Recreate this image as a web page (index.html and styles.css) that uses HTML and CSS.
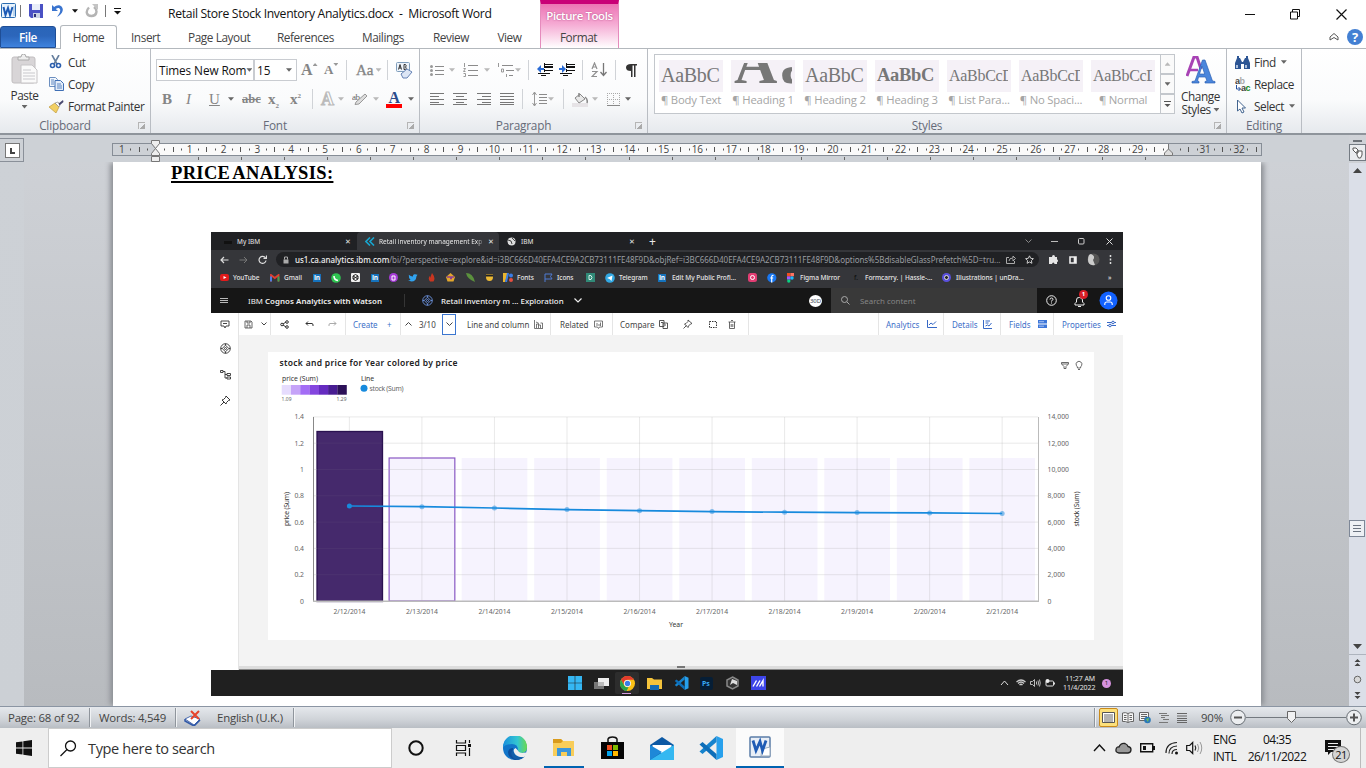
FILE: index.html
```html
<!DOCTYPE html>
<html lang="en">
<head>
<meta charset="utf-8">
<title>Retail Store Stock Inventory Analytics.docx - Microsoft Word</title>
<link rel="stylesheet" href="styles.css">
</head>
<body>
<div class="window">
<header class="titlebar">
  <div class="quick">
    <svg width="16" height="16" viewBox="0 0 16 16"><rect x=".5" y=".5" width="14" height="14" rx="1" fill="#e9f3fc" stroke="#2b6cb0"/><path d="M2.500 4l2 8 2.500-7 2 7 2.500-8" fill="none" stroke="#1d5bb5" stroke-width="2"/><path d="M13 3v10" stroke="#8db6df"/></svg>
    <i class="vsep"></i>
    <svg width="14" height="14" viewBox="0 0 14 14"><path d="M0 0h14v14H2l-2-2z" fill="#4a51c4"/><path d="M3 0h8v6H3z" fill="#e8edf8"/><path d="M4 9h7v5H4z" fill="#c9d2e4"/><path d="M5 10h2v3H5z" fill="#2b2f78"/></svg>
    <svg width="14" height="14" viewBox="0 0 14 14"><path d="M1 1v6h6L4.800 5C8 2.500 11 5 8 10l-2 3c6-3 8-9 3-11.500C7 .6 5 1.500 3.200 3z" fill="#3a74cf"/></svg>
    <i class="caret dark"></i>
    <svg width="14" height="14" viewBox="0 0 14 14"><path d="M9 3c4 3 3 9-2.500 9S.5 7 4 3.500" fill="none" stroke="#b4b4b4" stroke-width="2.400"/><path d="M7 0h6v6z" fill="#c4c4c4"/></svg>
    <i class="vsep"></i>
    <svg width="8" height="7" viewBox="0 0 8 7"><path d="M0 .5h7" stroke="#111"/><path d="M0 3h7L3.500 6.500z" fill="#111"/></svg>
  </div>
  <div class="doc-title">Retail Store Stock Inventory Analytics.docx&nbsp; -&nbsp; Microsoft Word</div>
  <div class="win-controls">
    <svg width="10" height="12"><path d="M0 6.500h10" stroke="#111"/></svg>
    <svg width="10" height="11"><path d="M.5 3h7v7h-7zM2.500 3V.5h7v7H7.500" fill="none" stroke="#111"/></svg>
    <svg width="11" height="11"><path d="M.5.500l10 10M10.500.5l-10 10" stroke="#111" stroke-width="1.200"/></svg>
  </div>
</header>
<nav class="tabs">
  <span class="tab file">File</span><span class="tab home">Home</span><span class="tab">Insert</span><span class="tab">Page Layout</span><span class="tab">References</span><span class="tab">Mailings</span><span class="tab">Review</span><span class="tab">View</span><span class="tab format">Format</span>
  <div class="tab-help">
    <svg width="10" height="8"><path d="M1 4l4-3.500L9 4v3L5 4.500 1 7z" fill="#fff" stroke="#555"/></svg>
    <span class="help">?</span>
  </div>
</nav>
<div class="context-tab">Picture Tools</div>

<section class="ribbon">
  <div class="group clipboard">
    <div class="clip-body">
      <div class="paste">
        <svg width="28" height="31" viewBox="0 0 28 31"><rect x="1" y="3" width="23" height="26" rx="2" fill="#d8d5d7" stroke="#c1bec0"/><path d="M7 3h3q0-3 2.500-3T15 3h3v3H7z" fill="#eee" stroke="#aaa"/><path d="M10 11h11l5 5v13H10z" fill="#fafafa" stroke="#c6c4c6"/><path d="M12 16h8M12 19h12M12 22h12M12 25h12" stroke="#c8c8cc"/></svg>
        <span>Paste</span><i class="caret"></i>
      </div>
      <div class="clip-list">
        <span><svg width="14" height="14" viewBox="0 0 14 14"><path d="M3 0l5 9M10 0L5 9" stroke="#667f9e" stroke-width="1.600"/><circle cx="3.500" cy="10.500" r="2" fill="none" stroke="#2a5eae" stroke-width="1.600"/><circle cx="9.500" cy="10.500" r="2" fill="none" stroke="#2a5eae" stroke-width="1.600"/></svg>Cut</span>
        <span><svg width="15" height="14" viewBox="0 0 15 14"><path d="M.5.500h6l2 2v7h-8z" fill="#f1f6fc" stroke="#6c8fc0"/><path d="M6 3.500h5.500l3 3v7H6z" fill="#e3ecf8" stroke="#3f6fb5"/><path d="M2 3h3M2 5h3M2 7h3M8 7h4M8 9h5M8 11h5" stroke="#5c86c2"/></svg>Copy</span>
        <span><svg width="15" height="13" viewBox="0 0 15 13"><path d="M0 7l6-4 4 4-3 6z" fill="#f1cf63" stroke="#b98f2c" stroke-width=".6"/><path d="M6 3l3-1 2 3-1 2z" fill="#fff" stroke="#777" stroke-width=".6"/><path d="M9.500 3.500L14 0l.5 2-4 3.500z" fill="#4a4a70"/></svg>Format Painter</span>
      </div>
    </div>
    <div class="group-label">Clipboard<i class="launch"></i></div>
  </div>

  <div class="group font">
    <div class="row font-top">
      <span class="combo">Times New Rom<i class="caret"></i></span><span class="combo">15<i class="caret"></i></span>
      <span class="serif grow">A<i class="caret up"></i></span><span class="serif shrink">A<i class="caret"></i></span><i class="gsep"></i><span class="serif aa">Aa<i class="caret dim"></i></span><i class="gsep"></i>
      <svg width="17" height="17" viewBox="0 0 17 17"><rect x=".5" y=".5" width="13" height="9" rx="1" fill="#eef4fb" stroke="#7f9dbb"/><path d="M2.500 7.500l1.500-5 1.500 5M3 6h2M8 2.500v5h1.500q1.500-1.200 0-2.500 1.500-1 0-2.500z" fill="none" stroke="#333"/><path d="M5 12l6-5 5 3-5 6H7z" fill="#dde6f5" stroke="#6683b5"/></svg>
    </div>
    <div class="row font-bottom">
      <b class="serif">B</b><em class="serif">I</em><u class="serif">U</u><i class="caret"></i><s class="serif abc">abc</s><span class="serif xs">x<sub>2</sub></span><span class="serif xs">x<sup>2</sup></span><i class="gsep"></i><span class="outline">A</span><i class="caret dim"></i>
      <svg width="16" height="15" viewBox="0 0 16 15"><text x="0" y="8" class="ic-ab">ab</text><path d="M4 10l9-8 2 2-8 8-4 .5z" fill="#ddd" stroke="#999"/></svg><i class="caret dim"></i>
      <span class="fontcolor">A</span><i class="caret"></i>
    </div>
    <div class="group-label">Font<i class="launch"></i></div>
  </div>

  <div class="group paragraph">
    <div class="row para-top">
      <svg width="14" height="13"><path d="M5 2.500h9M5 6.500h9M5 10.500h9" stroke="#8b8b8b"/><circle cx="1.500" cy="2.500" r="1.500" fill="#999"/><circle cx="1.500" cy="6.500" r="1.500" fill="#999"/><circle cx="1.500" cy="10.500" r="1.500" fill="#999"/></svg><i class="caret dim"></i>
      <svg width="15" height="14"><path d="M5 2.500h10M5 7.500h10M5 12.500h10" stroke="#8b8b8b"/><path d="M1.500 0v4M.500 5.500h2l-2 3h2M.5 10.500h2v3h-2" fill="none" stroke="#999"/></svg><i class="caret dim"></i>
      <svg width="17" height="15"><path d="M5 2.500h11M9 7.500h8M12 12.500h4" stroke="#8b8b8b"/><path d="M1.500 0v4M4.500 6h2v3h-2zM9.500 11v3" fill="none" stroke="#999"/></svg><i class="caret dim"></i><i class="gsep"></i>
      <svg width="16" height="14"><path d="M7 1.500h9M7 7.500h9M1 10.500h12M4 12.500h5" stroke="#111"/><path d="M7 4h9" stroke="#111" stroke-width="2"/><path d="M7.500 0v14" stroke="#111" stroke-dasharray="1 1"/><path d="M0 6l4-4v3h3v2H4v3z" fill="#2a6cd6"/></svg>
      <svg width="16" height="14"><path d="M7 1.500h9M7 7.500h9M1 10.500h12M4 12.500h5" stroke="#111"/><path d="M7 4h9" stroke="#111" stroke-width="2"/><path d="M7.500 0v14" stroke="#111" stroke-dasharray="1 1"/><path d="M7 6L3 2v3H0v2h3v3z" fill="#2a6cd6"/></svg><i class="gsep"></i>
      <svg width="16" height="16"><path d="M1 7L3.500 1 6 7M2 5h3M1 9.500h5l-5 5h5" fill="none" stroke="#909090" stroke-width="1.200"/><path d="M12.500 1v12M9.500 10l3 3.500 3-3.500" fill="none" stroke="#777" stroke-width="1.300"/></svg><i class="gsep"></i>
      <svg width="11" height="13"><path d="M5 0h6v1.500H9.500V13H8V1.500H6.500V13H5V7Q0 7 0 3.500T5 0z" fill="#333"/></svg>
    </div>
    <div class="row para-bottom">
      <svg width="14" height="12"><path d="M0 .5h14M0 3.500h9M0 6.500h14M0 9.500h9M0 11.500h14" stroke="#777"/></svg>
      <svg width="14" height="12"><path d="M0 .5h14M3 3.500h8M0 6.500h14M3 9.500h8M0 11.500h14" stroke="#777"/></svg>
      <svg width="14" height="12"><path d="M0 .5h14M5 3.500h9M0 6.500h14M5 9.500h9M0 11.500h14" stroke="#777"/></svg>
      <svg width="14" height="12"><path d="M0 .5h14M0 3.500h14M0 6.500h14M0 9.500h14M0 11.500h14" stroke="#777"/></svg><i class="gsep"></i>
      <svg width="15" height="16"><path d="M7 3.500h8M7 6.500h8M7 9.500h8M7 12.500h8" stroke="#8b8b8b"/><path d="M2.500 1v14M.5 4l2-3 2 3M.5 12l2 3 2-3" fill="none" stroke="#999"/></svg><i class="caret dim"></i><i class="gsep"></i>
      <svg width="16" height="15"><path d="M0 11h16v4H0z" fill="#e6e3e6"/><path d="M3 6l5-4 5 5-6 4z" fill="#e8e8e8" stroke="#888"/><path d="M7 5V1M13 5q3 2 2 6" fill="none" stroke="#888" stroke-width="1.500"/></svg><i class="caret dim"></i>
      <svg width="13" height="13"><path d="M0 .5h13M0 6.500h13M.5 0v13M6.500 0v13M12.500 0v13" stroke="#aaa" stroke-dasharray="1 1"/><path d="M0 12.500h13" stroke="#888"/></svg><i class="caret"></i>
    </div>
    <div class="group-label">Paragraph<i class="launch"></i></div>
  </div>

  <div class="group styles">
    <div class="styles-body">
      <div class="gallery">
        <div class="style"><b class="s20">AaBbC</b><span>¶ Body Text</span></div>
        <div class="style"><b class="big">Aa</b><span>¶ Heading 1</span></div>
        <div class="style"><b class="s20">AaBbC</b><span>¶ Heading 2</span></div>
        <div class="style"><b class="s20 bold">AaBbC</b><span>¶ Heading 3</span></div>
        <div class="style"><b class="s16">AaBbCcD</b><span>¶ List Para...</span></div>
        <div class="style"><b class="s16">AaBbCcD</b><span>¶ No Spaci...</span></div>
        <div class="style"><b class="s16">AaBbCcD</b><span>¶ Normal</span></div>
        <div class="gal-scroll"><span><i class="caret up dim"></i></span><span><i class="caret"></i></span><span><svg width="8" height="8"><path d="M0 1.500h7" stroke="#555"/><path d="M.5 4h6l-3 3z" fill="#555"/></svg></span></div>
      </div>
      <div class="change">
        <svg width="30" height="30" viewBox="0 0 30 30"><path d="M1 20L8 1h3l4 12" fill="none" stroke="#a843b5" stroke-width="3"/><path d="M4 14h8" stroke="#a843b5" stroke-width="2.500"/><path d="M6 27h7v-1.500l-1.500-.5 1-4h7l1.500 4-2 .5V27h10v-1.500L26.500 25 19 4h-2.500L9 25l-3 .5zM13.500 18L16 10l2.700 8z" fill="#4a86dc" stroke="#2c62b4" stroke-width=".7" fill-rule="evenodd"/></svg>
        <span>Change</span><span>Styles <i class="caret"></i></span>
      </div>
    </div>
    <div class="group-label">Styles<i class="launch"></i></div>
  </div>

  <div class="group editing">
    <div class="edit-list">
      <span><svg width="15" height="13"><path d="M0 13V7l2-5h3l2 4h1l2-4h3l2 5v6H9V8H6v5z" fill="#2c5594"/><path d="M2 9v3M11 9v3" stroke="#d7e4f4" stroke-width="1.500"/><path d="M3 0v3M12 0v3" stroke="#2c5594" stroke-width="2"/></svg>Find <i class="caret"></i></span>
      <span><svg width="16" height="15"><text x="0" y="7" class="ic-rep">a<tspan fill="#aaa">b</tspan></text><text x="6" y="14" class="ic-rep">a<tspan fill="#188a1c">c</tspan></text><path d="M1.500 8v4h4M3.500 10l2 2-2 2" fill="none" stroke="#234f9d"/></svg>Replace</span>
      <span><svg width="12" height="15"><path d="M2.500 1v11l2.500-2 2 4 2-1-2-4h3.500z" fill="#fff" stroke="#42648f"/></svg>Select <i class="caret"></i></span>
    </div>
    <div class="group-label">Editing</div>
  </div>
</section>

<main class="workspace">
  <aside class="left-rail"><div class="tabstop"><i></i></div></aside>
  <div class="desk">
    <svg class="ruler" id="ruler" width="1325" height="27" viewBox="24 135 1325 27"></svg>
    <article class="page">
      <h1>PRICE ANALYSIS:</h1>
      <figure class="shot">
        <div class="row c-tabs">
          <svg width="10" height="7"><path d="M1 3h8v3H1z" fill="#111"/></svg><span>My IBM</span><span>✕</span>
          <div class="c-active"><svg width="10" height="9"><path d="M5 .5L1 4.500l4 4M9 .5L5 4.500l4 4" fill="none" stroke="#18a6d0" stroke-width="1.600"/></svg><span class="c-name">Retail inventory management Exp</span><span>✕</span></div>
          <svg width="9" height="9"><circle cx="4.500" cy="4.500" r="4" fill="#ddd"/><path d="M1 3l3 1 1 3M5 1l3 3" fill="none" stroke="#444"/></svg><span>IBM</span><span>✕</span><span class="plus">+</span>
          <svg width="7" height="5"><path d="M.5.500l3 3 3-3" fill="none" stroke="#888"/></svg><svg width="7" height="3"><path d="M0 1.500h7" stroke="#bbb"/></svg><svg width="7" height="7"><rect x=".5" y=".5" width="5.500" height="5.500" rx="1" fill="none" stroke="#ccc"/></svg><svg width="7" height="7"><path d="M.5.500l6 6M6.500.5l-6 6" stroke="#ddd"/></svg>
        </div>
        <div class="row c-url">
          <svg width="9" height="8"><path d="M8.500 4H1M4 1L1 4l3 3" fill="none" stroke="#ddd" stroke-width="1.200"/></svg><svg width="9" height="8"><path d="M.5 4H8M5 1l3 3-3 3" fill="none" stroke="#777"/></svg><svg width="9" height="9"><path d="M7.500 3A3.500 3.500 0 1 0 8 5.500M8.500.500v3h-3" fill="none" stroke="#ddd" stroke-width="1.200"/></svg>
          <div class="pill"><svg width="6" height="8"><path d="M.5 3.500h5v4h-5z" fill="#aaa"/><path d="M1.500 3.500V1h3v2.500" fill="none" stroke="#aaa"/></svg><span class="url"><b>us1.ca.analytics.ibm.com</b>/bi/?perspective=explore&amp;id=i3BC666D40EFA4CE9A2CB73111FE48F9D&amp;objRef=i3BC666D40EFA4CE9A2CB73111FE48F9D&amp;options%5BdisableGlassPrefetch%5D=tru...</span><svg width="10" height="9"><path d="M3 2.500H.5v6h8V6M3 6q0-3 4-3V1l2.500 2.500L7 6V4" fill="none" stroke="#aaa"/></svg><svg width="9" height="9"><path d="M4.500 .8l1.200 2.500 2.700.4-2 1.900.5 2.700-2.400-1.300-2.400 1.300.5-2.700-2-1.900 2.700-.4z" fill="none" stroke="#ccc"/></svg></div>
          <svg width="9" height="9"><path d="M0 2h3q0-2 1.500-2T6 2h2v2.500q1 0 1 1.200T8 7v2H5.500q-.2-1.500-1.200-1.500T3 9H0z" fill="#e6e6e6"/></svg><svg width="8" height="8"><path d="M1 1h6v6H1zM5.500 1v6" fill="none" stroke="#eee" stroke-width="1.600"/></svg><svg width="13" height="13"><circle cx="6.500" cy="6.500" r="6" fill="#555"/><path d="M4 1q5 2 2 6l2 5q-7 1-7-5t3-6z" fill="#ccc"/></svg><svg width="3" height="9"><path d="M1.500 0v2M1.500 3.500v2M1.500 7v2" stroke="#ddd" stroke-width="1.500"/></svg>
        </div>
        <div class="row c-marks">
          <svg width="10" height="7"><rect width="9" height="7" rx="2" fill="#e21b1b"/><path d="M3.500 2l3 1.500-3 1.500z" fill="#fff"/></svg><span>YouTube</span>
          <svg width="10" height="8"><path d="M1 7.500V1l3.800 3L8.500 1v6.500" fill="none" stroke="#e23e30" stroke-width="1.800"/><path d="M1 2.500v5" stroke="#4285f4" stroke-width="1.800"/><path d="M8.500 2.500v5" stroke="#34a853" stroke-width="1.800"/></svg><span>Gmail</span>
          <i class="li">in</i>
          <svg width="10" height="10"><circle cx="5" cy="5" r="4.800" fill="#2fc351"/><path d="M3 3q0 4 4 4.500" fill="none" stroke="#fff" stroke-width="1.600"/></svg>
          <svg width="10" height="10"><rect width="9" height="9" rx="1" fill="#eee"/><path d="M2 3l2.500-1.500L7 3v3L4.500 7.500 2 6zl5 3M7 3L2 6" fill="none" stroke="#222"/></svg>
          <i class="li">in</i>
          <svg width="10" height="10"><circle cx="4.500" cy="4.500" r="4.500" fill="#a53bd5"/><path d="M3 7V3h3v4z" fill="none" stroke="#fff"/></svg>
          <svg width="10" height="8"><path d="M0 6.500q2 0 2.500-.8Q.5 4 .8.800 3 2.800 4.800 2.600 5 0 7 .3l2.500.4-1 1.500Q8 7.500 3.500 7.500z" fill="#31a2ee"/></svg>
          <svg width="7" height="9"><path d="M4 0q4 5 1.500 8.500H2Q-.5 5 2 3v2z" fill="#c93620"/></svg>
          <svg width="10" height="9"><path d="M0 4l4.500-4L9 4 7.500 8.500h-6z" fill="#e4a72c"/><path d="M1 4h7M4 5.500h2" stroke="#8b3f91" stroke-width="1.500"/></svg>
          <svg width="10" height="9"><path d="M0 0q7 0 9 9Q1 6 0 0z" fill="#5b913d"/></svg>
          <svg width="8" height="9"><path d="M0 1h7v3q0 4-3.500 4T0 4z" fill="#edba35"/><path d="M0 2.500h7" stroke="#222" stroke-width="2"/></svg>
          <svg width="10" height="9"><path d="M0 0h5L2 9H0z" fill="#e8b42d"/><path d="M5 0L3 9" stroke="#3a7de7" stroke-width="2"/><circle cx="8" cy="2.500" r="2" fill="#3a7de7"/><circle cx="8" cy="7" r="2" fill="#e64f40"/></svg><span>Fonts</span>
          <svg width="9" height="9"><path d="M1 9V1h7L6.500 3.500 8 6H1" fill="none" stroke="#4f7ad2"/></svg><span>Icons</span>
          <svg width="10" height="9"><path d="M0 0h9v9H0z" fill="#318a78"/><path d="M3 2.500h2l1 2-1 2H3z" fill="none" stroke="#d4efe9"/></svg>
          <svg width="10" height="10"><circle cx="5" cy="5" r="4.800" fill="#32a8e3"/><path d="M2 5l5.500-2.500L6.500 8 4.500 6z" fill="#fff"/></svg><span>Telegram</span>
          <i class="li">in</i><span>Edit My Public Profi...</span>
          <svg width="10" height="10"><rect width="9" height="9" rx="2.500" fill="#e23d73"/><circle cx="4.500" cy="4.500" r="2" fill="none" stroke="#fff"/></svg>
          <svg width="10" height="10"><circle cx="4.800" cy="4.800" r="4.600" fill="#1877f2"/><path d="M6.500 2.500q-1.800-.5-1.800 1.500v5.400M3.200 5h3" fill="none" stroke="#fff" stroke-width="1.200"/></svg>
          <svg width="7" height="10"><path d="M0 0h3.500v3.300H0z" fill="#f24e1e"/><path d="M3.500 0H7v3.300H3.500z" fill="#ff7262"/><path d="M0 3.300h3.500v3.300H0z" fill="#a259ff"/><circle cx="5" cy="5" r="1.700" fill="#1abcfe"/><circle cx="1.800" cy="8" r="1.700" fill="#0acf83"/></svg><span>Figma Mirror</span>
          <span class="f-dark">f.</span><span>Formcarry. | Hassle-...</span>
          <svg width="10" height="10"><circle cx="4.500" cy="4.500" r="4.500" fill="#5a50dc"/><circle cx="4.500" cy="4.500" r="2" fill="#222" stroke="#ddd"/></svg><span>Illustrations | unDra...</span><span>»</span>
        </div>
        <div class="row i-head">
          <svg width="8" height="7"><path d="M0 1.500h8M0 3.500h8M0 5.500h8" stroke="#ccc" stroke-width=".9"/></svg><span>IBM <b>Cognos Analytics with Watson</b></span><i class="i-div"></i>
          <svg width="11" height="11"><g fill="none" stroke="#6c93e0" stroke-width=".9"><circle cx="5.500" cy="5.500" r="4.800"/><circle cx="5.500" cy="5.500" r="1"/><path d="M5.500 2.200L8.800 5.500 5.500 8.800 2.200 5.500zM5.500.7v1.500M5.500 8.800v1.500M.7 5.500h1.500M8.800 5.500h1.500"/></g></svg><span class="semi">Retail inventory m ... Exploration</span><svg width="8" height="5"><path d="M.5.500L4 4 7.500.5" fill="none" stroke="#eee" stroke-width="1.200"/></svg>
          <i class="mini">30D</i>
          <div class="i-search"><svg width="9" height="9"><circle cx="3.500" cy="3.500" r="3" fill="none" stroke="#aaa"/><path d="M6 6l2.500 2.500" stroke="#aaa"/></svg><span>Search content</span></div>
          <svg width="11" height="11"><circle cx="5.500" cy="5.500" r="4.800" fill="none" stroke="#eee"/><path d="M4 4.500q0-1.500 1.500-1.500T7 4.300q0 1-1.500 1.500V6.500M5.500 7.500v1" fill="none" stroke="#eee"/></svg>
          <div class="bell"><svg width="11" height="12"><path d="M1 9h9V7.500L8.500 6V4q0-2-3-2.500T2.500 4v2L1 7.500zM4 10.500h3" fill="none" stroke="#eee"/></svg><i>1</i></div>
          <svg width="19" height="19"><circle cx="9.500" cy="9.500" r="9" fill="#1261fe"/><circle cx="9.500" cy="7" r="2.300" fill="none" stroke="#fff" stroke-width="1.100"/><path d="M5.800 14v-1q0-2 2-2h3.400q2 0 2 2v1" fill="none" stroke="#fff" stroke-width="1.100"/></svg>
        </div>
        <div class="i-main">
          <div class="i-side">
            <svg width="10" height="9"><path d="M1 1h8v5H6L5 8 4 6H1zM3 3.500h4" fill="none" stroke="#333" stroke-width=".9"/></svg>
            <svg width="11" height="11"><g fill="none" stroke="#333" stroke-width=".9"><circle cx="5.500" cy="5.500" r="4.800"/><circle cx="5.500" cy="5.500" r="1"/><path d="M5.500 2.200L8.800 5.500 5.500 8.800 2.200 5.500zM5.500.7v1.500M5.500 8.800v1.500M.7 5.500h1.500M8.800 5.500h1.500"/></g></svg>
            <svg width="11" height="10"><path d="M.5.500h2.500v2H.5zM3 1.500h2V8h2M5 4.500h2M7 3.500h3.500v2H7zM7 7h3.500v2H7z" fill="none" stroke="#333" stroke-width=".9"/></svg>
            <svg width="11" height="11"><path d="M6 1l4 4-1.500.5-2 2L6 9 2 5l1.500-.5 2-2zM4 7L.5 10.500" fill="none" stroke="#333"/></svg>
          </div>
          <div class="i-content">
            <div class="row i-tools">
              <svg width="9" height="9"><path d="M1 1h6l1 1v6H1zM3 1v2h3V1M3 8V5h3v3" fill="none" stroke="#444" stroke-width=".8"/></svg><svg width="6" height="4"><path d="M.5.500L3 3 5.500.500" fill="none" stroke="#444"/></svg>
              <svg width="9" height="9"><g fill="none" stroke="#333"><circle cx="2" cy="4.500" r="1.300"/><circle cx="7" cy="2" r="1.300"/><circle cx="7" cy="7" r="1.300"/><path d="M3 4l3-2M3 5l3 2"/></g></svg>
              <svg width="9" height="7"><path d="M1 2.500h6q1 0 1 1.500v1M3 .500l-2 2 2 2" fill="none" stroke="#333"/></svg><svg width="9" height="7"><path d="M8 2.500H2Q1 2.500 1 4v1M6 .500l2 2-2 2" fill="none" stroke="#aaa"/></svg>
              <span class="blue">Create</span><span class="blue">+</span>
              <svg width="7" height="4"><path d="M.5 3.500l3-3 3 3" fill="none" stroke="#444"/></svg><span>3/10</span><i class="focus"><svg width="7" height="4"><path d="M.5.500l3 3 3-3" fill="none" stroke="#444"/></svg></i>
              <span>Line and column</span><svg width="9" height="9"><path d="M.5 0v8.500H9M2.500 8V4h2v4M4.500 5h2v3M6.500 3h2v5M2 2l3 1.500" fill="none" stroke="#555" stroke-width=".8"/></svg>
              <span>Related</span><svg width="10" height="9"><path d="M.5 1h8v6h-3L4.500 8.500 3.500 7h-3zM3 3v3M5 4v2M6.500 2.500V6" fill="none" stroke="#555" stroke-width=".8"/></svg>
              <span>Compare</span><svg width="10" height="9"><path d="M.5.500h4.500v6H.5zM4 3h4.500v5.500H4zM2 2.500h2M5.500 5H7" fill="none" stroke="#444" stroke-width=".9"/></svg>
              <svg width="10" height="10"><path d="M5 1l4 3.500-1.500.5-2 2L5 8.500 1.500 5 3 4.500l2-2zM3.500 6.500L.5 9.500" fill="none" stroke="#444" stroke-width=".9"/></svg>
              <svg width="9" height="9"><path d="M1.500 1.500h7v6h-7z" fill="none" stroke="#333" stroke-dasharray="1.500 1"/></svg>
              <svg width="8" height="9"><path d="M.5 2h7M1.500 2v6.500h5V2M3 .5h2M3.200 4v3M4.800 4v3" fill="none" stroke="#444" stroke-width=".8"/></svg>
              <span class="blue">Analytics</span><svg width="10" height="8"><path d="M.5 0v7.500H10M2 5l2-2 2 1.500 3-3" fill="none" stroke="#3768c5"/></svg>
              <span class="blue">Details</span><svg width="10" height="9"><path d="M.5 0v8.500H9M2.500 1H7M2.500 3h3M2.500 6l2-1 1.500 1L8.500 3" fill="none" stroke="#3768c5"/></svg>
              <span class="blue">Fields</span><svg width="9" height="8"><path d="M0 0h9v3.500H0zM0 4.500h9V8H0z" fill="#3c76d8"/><path d="M1 1.700h5M1 6.200h5" stroke="#cfe0ff" stroke-width=".7"/></svg>
              <span class="blue">Properties</span><svg width="9" height="8"><path d="M0 2.500h9M0 5.500h9" stroke="#3768c5"/><circle cx="6" cy="2.500" r="1.300" fill="#fff" stroke="#3768c5"/><circle cx="3" cy="5.500" r="1.300" fill="#fff" stroke="#3768c5"/></svg>
            </div>
            <div class="i-canvas"><div class="card"><svg id="chart" width="826" height="288" viewBox="268 352 826 288"></svg></div></div>
            <div class="i-split"><i></i></div>
          </div>
        </div>
        <div class="row w11">
          <svg width="14" height="14"><path d="M0 0h6.700v6.700H0zM7.300 0H14v6.700H7.300zM0 7.300h6.700V14H0zM7.300 7.300H14V14H7.300z" fill="#35b7f3"/></svg>
          <svg width="15" height="11"><path d="M0 4h10v7H0z" fill="#777"/><path d="M4 0h11v8H4z" fill="#eee"/><path d="M4 4h6v4H4z" fill="#bbb"/></svg>
          <div class="w11-on"><svg width="15" height="15" viewBox="0 0 24 24"><circle cx="12" cy="12" r="12" fill="#fbc116"/><path d="M1.600 6A12 12 0 0 1 22.400 6H12a6 6 0 0 0-5.200 9z" fill="#e33b2e"/><path d="M1.600 6l5.200 9a6 6 0 0 0 7 2.700L10.500 24A12 12 0 0 1 1.600 6z" fill="#2ba24c"/><circle cx="12" cy="12" r="5.500" fill="#fff"/><circle cx="12" cy="12" r="4.300" fill="#3c7ee8"/></svg></div>
          <svg width="15" height="13"><path d="M0 1h5l2 1.500h8V12H0z" fill="#f4c33b"/><path d="M3 8h9v5H3z" fill="#146bb4"/></svg>
          <svg width="15" height="14" viewBox="0 0 24 24"><use href="#vsc"/></svg>
          <svg width="13" height="13"><rect width="13" height="13" rx="2" fill="#061e36"/><text x="2" y="9" class="ps">Ps</text></svg>
          <svg width="13" height="14"><path d="M6.500 1L12 4v6l-5.500 3L1 10V4z" fill="#333" stroke="#888" stroke-width="1.500"/><path d="M6 3l5 2v4L7 7 4 9z" fill="#ddd"/></svg>
          <svg width="15" height="14"><path d="M0 0h15v14H0z" fill="#3d45e8"/><path d="M2 10.500l3.500-6M5.500 10.500l3.500-6M8.500 10.500L12 4.500v6" fill="none" stroke="#fff" stroke-width="1.400"/></svg>
          <svg width="9" height="6"><path d="M1 5l3.500-4L8 5" fill="none" stroke="#ddd"/></svg>
          <svg width="10" height="8"><path d="M.5 3q4.500-4 9 0M2 4.500q3-3 6 0M3.500 6q1.500-1.500 3 0" fill="none" stroke="#ccc" stroke-width="1.200"/></svg>
          <svg width="11" height="8"><path d="M.5 2.500h2l2-2v7l-2-2h-2zM6.500 2.500v3M8 1.500q1 2.500 0 5M9.500.500q1.500 3.500 0 7" fill="none" stroke="#ccc" stroke-width=".9"/></svg>
          <svg width="11" height="8"><rect x="1" y="2" width="7.500" height="5" rx="1" fill="none" stroke="#ddd"/><path d="M9 3.500h1v2H9z" fill="#ddd"/><circle cx="2.500" cy="2" r="2" fill="#eee"/></svg>
          <span class="w11-time">11:27 AM<br>11/4/2022</span><i class="w11-badge">1</i>
        </div>
      </figure>
    </article>
  </div>
  <aside class="scroll">
    <svg width="17" height="571" viewBox="1349 135 17 571"><path d="M1349 163h17v543h-17z" fill="#dbdfe8"/><path d="M1353 140h9v2h-9z" fill="#6d7278"/><rect x="1349.500" y="144.500" width="16" height="16" fill="#e9ebee" stroke="#747b83"/><path d="M1353 148h3l2 2v3l-2 0-3-3zM1357 151h5v4l-1.500 3h-2l-1.500-3z" fill="#fff" stroke="#555"/><path d="M1353 173h9l-4.500-5zM1353 644h9l-4.500 5z" fill="#444"/><rect x="1349.500" y="520.500" width="15" height="16" fill="#edf0f4" stroke="#7d8797"/><path d="M1353 525.500h8M1353 528.500h8M1353 531.500h8" stroke="#6a7380"/><path d="M1349 654.500h17" stroke="#aeb4be"/><path d="M1354.500 662l3-3 3 3zM1354.500 666l3-3 3 3zM1354.500 692l3 3 3-3zM1354.500 696l3 3 3-3z" fill="#444"/><circle cx="1357.500" cy="679.500" r="3.300" fill="#d8d8d8" stroke="#666"/></svg>
  </aside>
</main>

<footer class="row status">
  <span>Page: 68 of 92</span><i class="ssep"></i><span>Words: 4,549</span><i class="ssep"></i>
  <svg width="17" height="16"><path d="M1 9l6-3 9 3-6 6z" fill="#fff" stroke="#4a6bb0"/><path d="M1 9v2l9 5 6-6" fill="none" stroke="#3159a8" stroke-width="1.500"/><path d="M7 1l8 8M15 1L7 9" stroke="#e6432c" stroke-width="2"/></svg>
  <span>English (U.K.)</span><i class="ssep"></i><i class="ssep"></i>
  <div class="view-on"><svg width="13" height="11"><path d="M.5.500h12v10H.5z" fill="#fff" stroke="#555"/><path d="M2 3h9M2 5h9M2 7h9M2 9h9" stroke="#555" stroke-width=".9"/></svg></div>
  <svg width="12" height="11"><path d="M.5 1q3-1 5.500.5Q8.500 0 11.500 1v8.500Q8.500 9 6 10.500 3.500 9 .5 9.500zM6 1.500v9M2 3.500h2.500M2 5.500h2.500M2 7.500h2.500M7.500 3.500H10M7.500 5.500H10M7.500 7.500H10" fill="#f5f5f5" stroke="#666"/></svg>
  <svg width="12" height="12"><path d="M.5.500h9v8h-9zM2 2.500h6M2 4.500h6M2 6.500h6" fill="#f5f5f5" stroke="#666"/><circle cx="8.500" cy="8" r="3.300" fill="#2a78b8"/><path d="M7 7l3-1-1 4z" fill="#6fbf5a"/></svg>
  <svg width="10" height="10"><path d="M0 .5h8M2 2.500h8M2 4.500h4M4 6.500h6M0 9.500h9" stroke="#777"/></svg>
  <svg width="10" height="10"><path d="M0 .5h10M0 3h10M0 5.500h10M0 7.500h10M0 9.500h10" stroke="#666"/></svg>
  <span>90%</span>
  <svg width="132" height="17"><path d="M16 8.500h100" stroke="#73797f"/><circle cx="8" cy="8.500" r="7.300" fill="#eceef0" stroke="#666c72"/><path d="M4 8.500h8" stroke="#555" stroke-width="2"/><path d="M57.500 2.500h8v7l-4 4-4-4z" fill="#f1f2f3" stroke="#666"/><circle cx="124" cy="8.500" r="7.300" fill="#eceef0" stroke="#666c72"/><path d="M120 8.500h8M124 4.500v8" stroke="#555" stroke-width="2"/></svg>
</footer>

<footer class="row taskbar">
  <svg width="16" height="16"><path d="M0 2.300L6.500 1.400v6.200H0zM7.300 1.300L16 0v7.600H7.300zM0 8.400h6.500v6.200L0 13.700zM7.300 8.400H16V16l-8.700-1.300z" fill="#111"/></svg>
  <div class="search"><svg width="17" height="17"><circle cx="10.500" cy="6" r="5" fill="none" stroke="#111" stroke-width="1.300"/><path d="M7 9.500L.5 16" stroke="#111" stroke-width="1.300"/></svg><span>Type here to search</span></div>
  <svg width="16" height="16"><circle cx="8" cy="8" r="6.700" fill="none" stroke="#111" stroke-width="2"/></svg>
  <svg width="17" height="16"><path d="M1.500 0v3h9V0M1.500 5.500h9v5h-9zM1.500 16v-3h9v3M14.500 0v3M14.500 8v8" fill="none" stroke="#111" stroke-width="1.200"/><path d="M13 4h3v3h-3z" fill="#111"/></svg>
  <svg width="24" height="24" viewBox="0 0 24 24"><defs><linearGradient id="eg"><stop offset="0" stop-color="#1a8fdc"/><stop offset=".6" stop-color="#33c6d2"/><stop offset="1" stop-color="#6bd94e"/></linearGradient></defs><circle cx="12" cy="12" r="12" fill="#1275c9"/><path d="M0 11A12 12 0 0 1 24 11q0 6-6 6-5 0-3-3Q15 8 9 8q-6 0-9 3z" fill="url(#eg)"/><path d="M10 12q-1 7 5 9 4 1 7-1-4 4-10 4-7-2-7-8 1-4 5-4z" fill="#0c4f9e"/><path d="M14.500 14q2 4 8 2.500l1 .5-2 4q-9 1-11-6 0-2 2-3z" fill="#eee"/><path d="M10 13q0 7 7 8.500 3 .3 5-1-5 5-11 2-5-4-1-9.500z" fill="#115ea9"/></svg>
  <div class="app-on"><svg width="22" height="19"><path d="M0 1h8l2 2h11v15H0z" fill="#f8cd59"/><path d="M0 1h8l2 2-2 2H0z" fill="#d99b1c"/><path d="M4 18v-8h14v8h-4v-4H8v4z" fill="#3b96db"/></svg></div>
  <svg width="24" height="24"><path d="M7 7V3q1-2 4.500-2T16 3v4" fill="none" stroke="#111" stroke-width="1.500"/><path d="M0 6h23v17H0z" fill="#050505"/><path d="M6 9h5v5H6z" fill="#f25022"/><path d="M12 9h5v5h-5z" fill="#7fba00"/><path d="M6 15h5v5H6z" fill="#00a4ef"/><path d="M12 15h5v5h-5z" fill="#ffb900"/></svg>
  <svg width="24" height="23"><path d="M0 8l12-8 12 8v15H0z" fill="#0c59a4"/><path d="M2.500 8h19v8h-19z" fill="#fff"/><path d="M0 8l12 7L0 23z" fill="#1e88d8"/><path d="M24 8v15H0z" fill="#35b8f1"/></svg>
  <svg width="24" height="24" viewBox="0 0 24 24"><g id="vsc"><path d="M17.500 0L24 3v18l-6.500 3z" fill="#27a0ec"/><path d="M17.500 0v6L3.500 18 .5 15.500z" fill="#1683cd"/><path d="M17.500 24v-6L3.500 6l-3 2.500z" fill="#0d6eb9"/></g></svg>
  <div class="app-cur"><svg width="23" height="23"><rect x="1" y="1" width="20" height="20" rx="1" fill="#e9eff7" stroke="#5b7da8" stroke-width="1.500"/><path d="M13 13l8-2v9h-9z" fill="#fff" stroke="#9ab"/><path d="M4 4.500l3 10 4-9 2.500 9 3.500-10" fill="none" stroke="#1f5cb5" stroke-width="2.800"/></svg></div>
  <svg width="13" height="8"><path d="M1 7l5.500-6L12 7" fill="none" stroke="#111" stroke-width="1.400"/></svg>
  <svg width="17" height="12"><path d="M4 11q-3.500-.5-3-3.500T4 5q2-4.500 6-3.500 2.500 1 3 3 3 .3 3 3.200T13 11z" fill="#999" stroke="#222" stroke-width="1.300"/></svg>
  <svg width="15" height="10"><path d="M.7.700h12v8h-12z" fill="none" stroke="#111" stroke-width="1.400"/><path d="M3 3h3v4H3zM13 3h2v4h-2z" fill="#111"/></svg>
  <svg width="14" height="14"><g fill="none" stroke="#222" stroke-width="1.200"><path d="M1 12Q1 2 12 1.500M4 12.500Q4 5.500 12 5M7 13q0-4.500 5-4.500"/></g><circle cx="11.500" cy="12" r="1.500" fill="#111"/></svg>
  <svg width="17" height="14"><path d="M.7 4.500h3l3-3v11l-3-3h-3z" fill="none" stroke="#111" stroke-width="1.200"/><path d="M9 4.500q1.500 2.500 0 5" fill="none" stroke="#222" stroke-width="1.200"/><path d="M11.500 3q2.500 4 0 8M14 1q3.500 6 0 12" fill="none" stroke="#999"/></svg>
  <span class="lang">ENG<br>INTL</span><span class="clock">04:35<br>26/11/2022</span>
  <div class="notif"><svg width="17" height="16"><path d="M0 0h16v12H6l-3 3v-3H0z" fill="#111"/><path d="M3 3.500h10M3 6.500h10M3 9.500h6" stroke="#eee"/></svg><i>21</i></div>
  <i class="peek"></i>
</footer>
</div>
<script src="script.js"></script>
</body>
</html>
```
FILE: styles.css
```css
* { box-sizing: border-box; }
body { margin: 0; overflow: hidden; font-family: "Open Sans", "Noto Sans", sans-serif; font-size: 11.800px; letter-spacing: -.42px; color: #333; }
svg { display: block; }
i { font-style: normal; }
.window { position: relative; width: 1366px; height: 768px; display: flex; flex-direction: column; background: #fff; overflow: hidden; }
.row { display: grid; align-items: center; justify-content: start; white-space: nowrap; }

/* title bar */
.titlebar { height: 25px; display: grid; grid-template-columns: 168px 1fr 121px; align-items: center; flex: none; }
.quick { display: grid; grid-template-columns: 19px 9px 22px 21px 13px 20px 9px 10px; align-items: center; padding-left: 1px; margin-top: -3px; }
.vsep { width: 1px; height: 12px; background: #777; }
.doc-title { font-size: 12.200px; letter-spacing: -.33px; color: #111; padding-top: 1px; }
.win-controls { display: grid; grid-template-columns: 45px 46px 20px; padding-top: 3px; align-items: center; }
.caret { display: inline-block; width: 6px; height: 3.500px; background: #666; clip-path: polygon(0 0, 100% 0, 50% 100%); }
.caret.dark { background: #111; }
.caret.dim { background: #b9b9b9; }
.caret.up { clip-path: polygon(0 100%, 100% 100%, 50% 0); }

/* tabs */
.tabs { height: 24px; display: flex; align-items: stretch; border-bottom: 1px solid #b3b8bd; flex: none; color: #444; line-height: 24px; }
.tab { padding: 0 14px; white-space: nowrap; text-align: center; position: relative; z-index: 2; }
.tab.file { width: 56px; margin: 1px 4px 0 0; color: #fff; font-weight: 600; background: linear-gradient(#2a65b8, #2c66bb 45%, #3f83de); border: 1px solid #1f4e96; border-radius: 3px 3px 0 0; line-height: 21px; padding: 0; }
.tab.home { width: 57px; height: 24px; padding: 0; border: 1px solid #b3b8bd; border-bottom: 0; border-radius: 3px 3px 0 0; background: #fff; line-height: 23px; }
.tab:nth-child(3) { width: 57px; } .tab:nth-child(4) { width: 89px; } .tab:nth-child(5) { width: 84px; } .tab:nth-child(6) { width: 72px; } .tab:nth-child(7) { width: 64px; } .tab:nth-child(8) { width: 53px; margin-right: 2px; }
.tab.format { width: 79px; margin-left: 1px; }
.tab-help { margin-left: auto; display: flex; gap: 8px; align-items: center; padding-right: 3px; }
.help { width: 16px; height: 16px; border-radius: 50%; background: #4380d3; color: #fff; font: bold 13px/16px "Open Sans", sans-serif; text-align: center; border: 0; }
.context-tab { position: absolute; left: 540px; top: 0; width: 79px; height: 48px; border-top: 4px solid #c90077; background: linear-gradient(#ec74b4, #f5aad3 45%, #fff); border-left: 1px solid #e58bbd; border-right: 1px solid #e58bbd; color: #fff; font-weight: 600; text-align: center; line-height: 23px; font-size: 11.500px; text-shadow: 0 0 2px #b04580; z-index: 1; }

/* ribbon */
.ribbon { height: 86px; flex: none; display: flex; background: linear-gradient(#fff, #fafbfc 60%, #e6e9ed); border-bottom: 2px solid #8e949b; }
.group { height: 84px; border-right: 1px solid #b9bdc3; display: flex; flex-direction: column; position: relative; flex: none; }
.clipboard { width: 151px; } .font { width: 269px; } .paragraph { width: 228px; } .styles { width: 579px; } .editing { width: 75px; }
.group-label { margin-top: auto; height: 15px; line-height: 15px; text-align: center; color: #666b78; padding-right: 20px; letter-spacing: -.2px; }
.editing .group-label { padding-right: 0; }
.launch { position: absolute; right: 5px; bottom: 4px; width: 7px; height: 7px; border-left: 1px solid #b5b5b5; border-top: 1px solid #b5b5b5; background: linear-gradient(135deg, transparent 55%, #aaa 55%); }
.clip-body { display: grid; grid-template-columns: 49px 100px; height: 67px; }
.paste { display: flex; flex-direction: column; align-items: center; padding-top: 5px; line-height: 15px; gap: 2px; }
.paste span { margin-top: 1px; }
.clip-list { display: grid; grid-template-rows: 22px 22px 22px; padding-top: 2px; }
.clip-list span, .edit-list span { display: grid; grid-template-columns: 19px auto auto; align-items: center; justify-content: start; white-space: nowrap; }
.gsep { width: 1px; height: 20px; background: #d0d3d7; }
.serif { font-family: "Liberation Serif", serif; color: #858585; font-size: 15px; letter-spacing: 0; }
.row .serif sup, .row .serif sub { font-size: 7px; line-height: 0; }
.font-top { height: 22px; margin: 10px 0 0 5px; grid-template-columns: 98px 47px 23px 22px 10px 31px 9px 20px; }
.combo { height: 22px; border: 1px solid #c9ccd1; background: #fff; display: flex; align-items: center; justify-content: space-between; padding: 0 4px 0 2px; color: #111; width: 98px; letter-spacing: -.1px; }
.combo + .combo { width: 43px; }
.combo .caret { flex: none; }
.grow, .shrink { display: flex; align-items: flex-start; font-size: 16px; line-height: 18px; font-weight: bold; }
.shrink { font-size: 13px; }
.grow .caret, .shrink .caret { width: 5px; height: 3px; background: #999; margin-top: 2px; }
.aa { font-size: 15px; display: flex; align-items: center; gap: 2px; -webkit-text-stroke: .300px #858585; }
.font-bottom { height: 22px; margin: 7px 0 0 11px; grid-template-columns: 24px 23px 19px 14px 26px 23px 22px 9px 17px 14px 21px 13px 23px 10px; }
.font-bottom { grid-template-columns: 24px 23px 19px 14px 26px 22px 22px 9px 17px 14px 21px 13px 22px 10px; }
.abc { font-size: 12.500px; font-weight: bold; } .xs { font-weight: bold; }
.outline { font: bold 18px/20px "Liberation Serif", serif; color: #fff; -webkit-text-stroke: 1.200px #bbb; }
.fontcolor { font: bold 16px/13px "Liberation Serif", serif; color: #2b4c8c; border-bottom: 4px solid red; width: 16px; text-align: center; margin-top: 1px; }
.ic-ab { font: 9px "Liberation Serif", serif; fill: #666; }
.ic-rep { font: bold 9px "Liberation Sans", sans-serif; fill: #444; }
.para-top { height: 22px; margin: 10px 0 0 10px; grid-template-columns: 19px 14px 21px 13px 18px 13px 9px 22px 23px 9px 24px 11px 12px; }
.para-bottom { height: 22px; margin: 7px 0 0 10px; grid-template-columns: 23px 24px 23px 22px 10px 16px 15px 9px 20px 15px 18px 10px; }
.styles-body { display: flex; height: 67px; padding: 5px 0 0 6px; }
.gallery { width: 521px; height: 60px; border: 1px solid #c3c7cc; background: #fff; display: flex; padding: 5px 0 0 4px; gap: 8px; }
.style { width: 64px; flex: none; text-align: center; color: #a5a5a5; line-height: 15px; white-space: nowrap; }
.style b { display: block; height: 32px; background: #f5f1f7; font: 20px/31px "Liberation Serif", serif; color: #777; letter-spacing: -.3px; overflow: hidden; padding: 0 0 0 2px; text-align: left; border-right: 3px solid #f5f1f7; }
.style .bold { font-weight: bold; font-size: 18.500px; } .style .s16 { font-size: 16px; }
.style .big { font: bold 60px/0 "Liberation Serif", serif; letter-spacing: 3px; padding-left: 3px; border-top: 3px solid #f5f1f7; }
.style span { letter-spacing: -.2px; font-size: 11.300px; }
.gal-scroll { width: 15px; margin: -6px -1px 0 -3px; display: grid; grid-template-rows: 20px 20px 20px; }
.gal-scroll span { border: 1px solid #c3c7cc; display: grid; place-items: center; background: #fafafa; }
.change { width: 52px; text-align: center; line-height: 12.500px; display: flex; flex-direction: column; align-items: center; padding-top: 2px; }
.change span { white-space: nowrap; }
.change span:first-of-type { margin-top: 4px; }
.change .caret { vertical-align: 2px; }
.edit-list { padding: 2px 0 0 8px; display: grid; grid-template-rows: 22px 22px 22px; height: 67px; }
.edit-list .caret { margin-left: 5px; }

/* document area */
.workspace { height: 571px; display: grid; grid-template-columns: 24px 1325px 17px; background: linear-gradient(#cfd2d7, #b8bbbf); flex: none; }
.left-rail { background: linear-gradient(#cdd1d6, #ccd0d5); padding-top: 3px; }
.tabstop { width: 24px; height: 24px; border: 1px solid #8a9099; border-left: 0; padding: 4px 0 0 5px; }
.tabstop i { display: block; width: 15px; height: 15px; border: 1px solid #777; background: #fff; }
.tabstop i::after { content: ""; display: block; width: 3px; height: 4px; margin: 4px 0 0 4px; border-left: 2px solid #444; border-bottom: 2px solid #444; }
.ruler { background: #cdd1d6; }
.ruler text { font: 10px "Open Sans", sans-serif; fill: #444; text-anchor: middle; letter-spacing: -.2px; }
.page { width: 1148px; height: 544px; margin-left: 89px; background: #fff; box-shadow: -4px 0 5px -1px #8d9095, 4px 0 5px -1px #8d9095; padding-left: 98px; clip-path: inset(0 -9px 0 -9px); }
h1 { margin: 0 0 0 -40px; height: 70px; font: bold 18.500px/22px "Liberation Serif", serif; text-decoration: underline; text-decoration-thickness: 2px; text-underline-offset: 2px; color: #000; letter-spacing: .350px; word-spacing: -2px; }

/* pasted figure */
.shot { margin: 0; width: 912px; height: 464px; background: #fff; font-family: "Noto Sans", sans-serif; font-size: 7.500px; letter-spacing: 0; color: #555; display: flex; flex-direction: column; overflow: hidden; }
.shot .row { flex: none; }
.c-tabs { height: 18px; background: #202124; color: #e8e8e8; font-size: 6.500px; grid-template-columns: 14px 108px 12px 150px 14px 108px 20px 376px 26px 27px 28px 20px; padding-left: 12px; }
.c-active { height: 18px; background: #35363a; display: grid; grid-template-columns: 14px 109px 12px; align-items: center; padding-left: 8px; width: 142px; border-radius: 4px 4px 0 0; }
.c-name { width: 106px; mask-image: linear-gradient(90deg, #000 92%, transparent); }
.plus { font-size: 12px; }
.c-url { height: 19px; background: #35363a; grid-template-columns: 19px 19px 18px 773px 20px 18px 22px 10px; padding-left: 9px; }
.pill { width: 763px; height: 15px; border-radius: 8px; background: #202124; display: grid; grid-template-columns: 12px 711px 19px 10px; align-items: center; padding-left: 7px; color: #9a9da1; }
.url { font-size: 8px; letter-spacing: -.050px; width: 704px; }
.url b { font-weight: 500; color: #eee; }
.c-marks { height: 19px; background: #35363a; color: #e5e5e5; font-size: 6.500px; letter-spacing: -.05px; font-weight: 500; padding: 0 0 2px 9px; grid-template-columns: 13px 37px 14px 29px 18px 20px 20px 18px 19px 20px 18px 20px 20px 17px 14px 27px 13px 29px 19px 14px 39px 14px 76px 19px 20px 13px 54px 11px 77px 14px 152px 10px; }
.li { width: 8px; height: 8px; background: #1572bc; color: #fff; font: bold 6.500px/8px "Open Sans", sans-serif; text-align: center; }
.f-dark { color: #111; }
.i-head { height: 25px; background: #161616; color: #f1f1f1; font-size: 7.900px; padding-left: 9px; grid-template-columns: 28px 156px 18px 19px 133px 235px 22px 215px 27px 26px 20px; }
.i-head b, .semi { font-weight: 600; }
.i-head b { letter-spacing: .050px; }
.semi { font-weight: 500; }
.i-div { width: 1px; height: 13px; background: #353535; }
.mini { width: 13px; height: 12px; border-radius: 50%; background: #fff; color: #345; font-size: 6px; line-height: 12px; text-align: center; }
.i-search { width: 206px; height: 25px; background: #393939; display: grid; grid-template-columns: 19px auto; align-items: center; justify-content: start; padding-left: 10px; color: #858585; }
.bell { position: relative; padding-top: 2px; left: 1px; }
.bell i { position: absolute; left: 5px; top: -4px; width: 9px; height: 9px; border-radius: 50%; background: #d91e28; color: #fff; font-size: 6px; line-height: 9px; text-align: center; font-weight: bold; }
.i-main { height: 357px; display: grid; grid-template-columns: 28px 884px; flex: none; }
.i-side { background: #fff; border-right: 1px solid #e4e4e4; display: grid; grid-template-rows: 22px 27px 25px 26px; justify-items: center; align-items: center; align-content: start; padding-left: 1px; }
.i-content { background: #f3f3f3; }
.i-tools { height: 22px; color: #444; font-size: 8px; padding-left: 5px; grid-template-columns: 17px 19px 25px 23px 25px 34px 18px 14px 23px 25px 67px 26px 34px 26px 39px 24px 25px 20px 158px 41px 25px 31px 26px 29px 24px 45px 20px; background: linear-gradient(#e5e5e5, #e5e5e5) 31px 0 / 1px 22px no-repeat, linear-gradient(#e5e5e5, #e5e5e5) 106px 0 / 1px 22px no-repeat, linear-gradient(#e5e5e5, #e5e5e5) 161px 0 / 1px 22px no-repeat, linear-gradient(#e5e5e5, #e5e5e5) 311px 0 / 1px 22px no-repeat, linear-gradient(#e5e5e5, #e5e5e5) 373px 0 / 1px 22px no-repeat, linear-gradient(#e5e5e5, #e5e5e5) 509px 0 / 1px 22px no-repeat, linear-gradient(#e5e5e5, #e5e5e5) 639px 0 / 1px 22px no-repeat, linear-gradient(#e5e5e5, #e5e5e5) 704px 0 / 1px 22px no-repeat, linear-gradient(#e5e5e5, #e5e5e5) 761px 0 / 1px 22px no-repeat, linear-gradient(#e5e5e5, #e5e5e5) 814px 0 / 1px 22px no-repeat, #fff; }
.blue { color: #3d70c8; }
.focus { width: 14px; height: 21px; border: 1px solid #3b76d0; display: grid; place-items: center; }
.i-canvas { padding: 17px 0 0 29px; height: 331px; }
.card { width: 826px; height: 288px; background: #fff; }
.i-split { height: 4px; background: #dcdcdc; border-bottom: 1px solid #888; }
.i-split i { display: block; width: 8px; height: 2px; margin-left: 438px; background: #777; }
#chart text { font: 6.800px "Noto Sans", sans-serif; fill: #666; }
#chart text.dark { fill: #333; } #chart text.head { font-size: 8.500px; font-weight: 600; fill: #222; } #chart text.tiny { font-size: 5px; }
.w11 { height: 26px; background: #202020; color: #e5e5e5; padding-left: 357px; grid-template-columns: 26px 21px 32px 27px 26px 26px 25px 249px 16px 14px 15px 18px 41px 10px; font-size: 7px; letter-spacing: -.1px; line-height: 9px; }
.w11-on { width: 24px; height: 22px; background: #2d2d2d; border-radius: 2px; display: grid; place-items: center; position: relative; }
.w11-on::after { content: ""; position: absolute; bottom: 0; left: 7px; width: 9px; height: 1.500px; background: #d49be0; }
.ps { font: bold 7px "Open Sans", sans-serif; fill: #38a9f5; }
.w11-time { text-align: right; width: 32px; }
.w11-badge { width: 9px; height: 9px; border-radius: 50%; background: #d792df; color: #222; text-align: center; font-size: 6px; margin-left: -2px; }

/* status bar */
.status { height: 22px; flex: none; border-top: 1px solid #8b95a3; background: linear-gradient(#e5e8ec, #cfd3d8 60%, #b9bec4); color: #444; padding-left: 8px; grid-template-columns: 81px 10px 76px 9px 33px 76px 801px 5px 23px 17px 20px 18px 24px 29px 132px; letter-spacing: -.2px; font-size: 11.400px; }
.ssep { width: 1px; height: 19px; background: #8f959c; box-shadow: 1px 0 #f0f2f4; }
.view-on { width: 19px; height: 19px; border: 1px solid #c98a1b; border-radius: 2px; background: #fce07b; display: grid; place-items: center; }

/* taskbar */
.taskbar { height: 40px; flex: none; background: #eee; padding-left: 16px; grid-template-columns: 32px 360px 47px 48px 41px 57px 49px 49px 37px 357px 22px 25px 25px 21px 27px 33px 77px 37px 1px; color: #111; }
.search { width: 344px; height: 40px; background: #fff; border: 1px solid #ccc; display: grid; grid-template-columns: 28px auto; align-items: center; justify-content: start; padding-left: 11px; color: #333; font-size: 14.500px; letter-spacing: -.35px; }
.app-on { width: 40px; height: 40px; border-bottom: 2px solid #0063b1; display: grid; place-items: center; }
.app-cur { width: 48px; height: 40px; border-bottom: 2px solid #0063b1; background: #fbfbfb; display: grid; place-items: center; }
.lang, .clock { line-height: 17px; letter-spacing: -.5px; font-size: 12px; }
.clock { width: 60px; text-align: center; margin-left: 1px; }
.notif { position: relative; margin-top: -1px; left: 2px; }
.notif i { position: absolute; left: 7px; top: 6px; width: 18px; height: 17px; border-radius: 50%; border: 1px solid #777; background: #d4d4d4; font-size: 11px; line-height: 15px; text-align: center; }
.peek { width: 1px; height: 40px; background: #bbb; }
```
FILE: script.js
```js
(function () {
  // Ruler: white band between the indents, centimetre labels and tick marks.
  var zero = 155.7, cm = 33.85, s = '';
  s += '<rect x="112.5" y="143.500" width="1149" height="12" fill="#cdd1d6" stroke="#868d96"/>';
  s += '<rect x="156" y="144" width="1012" height="11" fill="#fafafa"/>';
  for (var q = -4; q <= 130; q++) {
    var x = zero + q * cm / 4;
    if (x > 1260 || q === 0 || q === 120) continue;
    if (q % 4 === 0) s += '<text x="' + x.toFixed(1) + '" y="153">' + Math.abs(q / 4) + '</text>';
    else if (q % 2 === 0) s += '<path d="M' + Math.round(x) + '.5 147v5" stroke="#555"/>';
    else s += '<path d="M' + Math.round(x) + '.5 148.500v2" stroke="#555"/>';
  }
  for (var t = 0; t < 23; t++) s += '<path d="M' + Math.round(198 + t * 43.05) + '.5 157v3" stroke="#666"/>';
  s += '<path d="M151.500 140.500h8v3l-4 5 4 5v2h-8v-2l4-5-4-5zM151.500 156.500h8v5h-8z" fill="#eee" stroke="#777"/>';
  s += '<path d="M1168.500 144v5l4 4v2.500h-8V153l4-4" fill="#ddd" stroke="#777"/>';
  document.getElementById('ruler').innerHTML = s;

  // Combination chart: price columns with the stock line on a second axis.
  var c = '', i, first = 349.4, step = 72.53, base = 601, gap = 26.3;
  var stock = [506, 506.700, 508, 509.600, 510.700, 511.600, 512.200, 512.600, 512.900, 513.500];
  function text(x, y, str, w, cls, anchor) {
    return '<text x="' + x + '" y="' + y + '"' + (w ? ' textLength="' + w + '"' : '') +
      (cls ? ' class="' + cls + '"' : '') + (anchor ? ' text-anchor="' + anchor + '"' : '') + '>' + str + '</text>';
  }
  c += text(279.500, 366, 'stock and price for Year colored by price', 178, 'head');
  c += text(282, 381, 'price (Sum)', 36, 'dark') + text(361, 381, 'Line', 13, 'dark');
  ['#e6dcfd', '#c5a3f8', '#a36df5', '#8446df', '#652bc0', '#481d92', '#2c1158'].forEach(function (f, k) {
    c += '<rect x="' + (281.700 + k * 9.280) + '" y="385" width="9.400" height="9.700" fill="' + f + '"/>';
  });
  c += text(281.500, 401, '1.09', 10, 'tiny') + text(336.500, 401, '1.29', 10, 'tiny');
  c += '<circle cx="364" cy="388.300" r="3.500" fill="#178add"/>' + text(369.500, 391, 'stock (Sum)', 34);
  for (i = 0; i < 10; i++) {
    var fx = 316.600 + i * step;
    if (i === 0) c += '<rect x="317" y="431.500" width="65.500" height="170" fill="#45296c" stroke="#2a1250" stroke-width="1.300"/>';
    else c += '<rect x="' + fx + '" y="458" width="65.700" height="143" fill="#f6f3fe"' + (i === 1 ? ' stroke="#8a58c4" stroke-width="1.200"' : '') + '/>';
  }
  for (i = 0; i < 8; i++) {
    var y = base - i * gap;
    if (i) c += '<path d="M313 ' + y + 'h4M383 ' + y + 'h655" stroke="#aaa" stroke-opacity=".25"/><path d="M317 ' + y + 'h66" stroke="#aaa" stroke-opacity="' + (i < 7 ? .08 : .25) + '"/>';
    c += text(304, y + 2.500, ['0', '0.2', '0.4', '0.6', '0.8', '1', '1.2', '1.4'][i], 0, '', 'end');
    c += text(1047.500, y + 2.500, i ? (i * 2) + ',000' : '0', i ? (i > 4 ? 21.500 : 17.500) : 0);
  }
  for (i = 0; i < 10; i++) {
    var cx = first + i * step;
    c += '<path d="M' + cx + ' 417v' + (i ? 184 : 14) + '" stroke="#aaa" stroke-opacity=".25"/>';
    c += text(cx, 614, '2/' + (12 + i) + '/2014', 32, '', 'middle');
  }
  c += '<path d="M313.500 417v184" stroke="#888"/><path d="M1038.500 417v184" stroke="#bbb"/><path d="M313 601.200h726" stroke="#bbb" stroke-width="1.400"/>';
  c += '<polyline fill="none" stroke="#178add" stroke-width="1.700" points="' + stock.map(function (v, k) { return (first + k * step) + ',' + v; }).join(' ') + '"/>';
  stock.forEach(function (v, k) { c += '<circle cx="' + (first + k * step) + '" cy="' + v + '" r="2.500" fill="#178add" opacity="' + (k ? .5 : 1) + '"/>'; });
  c += text(676, 626.500, 'Year', 14, 'dark', 'middle');
  c += '<g transform="rotate(-90 289 509)">' + text(289, 509, 'price (Sum)', 34, 'dark', 'middle') + '</g>';
  c += '<g transform="rotate(-90 1079 509)">' + text(1079, 509, 'stock (Sum)', 35, 'dark', 'middle') + '</g>';
  c += '<path d="M1061.500 362.500h7v1.500l-2.500 2.500v2h-2v-2l-2.500-2.500zM1062 364h6M1077.500 368q0-1.300-1-2.300a2.900 2.900 0 1 1 5 0q-1 1-1 2.300zM1078 369.500h2" fill="none" stroke="#444" stroke-width=".8"/>';
  document.getElementById('chart').innerHTML = c;
})();
```
